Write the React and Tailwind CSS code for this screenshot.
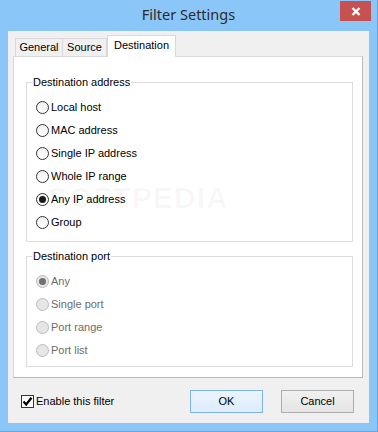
import React from 'react';

const font = { fontFamily: '"Liberation Sans", Arial, sans-serif' };

const Radio = ({ label, checked, disabled }) => (
	<div className="h-[23px] flex items-center pl-[9px]">
		<span
			className={`w-[13px] h-[13px] rounded-full border flex items-center justify-center ${
				disabled
					? 'border-[#bcbcbc] bg-[#e6e6e6]'
					: 'border-[#333333] bg-gradient-to-b from-[#f0f0f0] to-[#ffffff]'
			}`}
		>
			{checked && (
				<span className={`w-[7px] h-[7px] rounded-full ${disabled ? 'bg-[#707070]' : 'bg-[#1a1a1a]'}`}></span>
			)}
		</span>
		<span className={`relative z-10 ml-[2px] text-[11px] ${disabled ? 'text-[#6d6d6d]' : 'text-black'}`}>{label}</span>
	</div>
);

const Group = ({ title, children, className }) => (
	<div className={`relative border border-[#dcdcdc] ${className}`}>
		<span className="absolute -top-[8px] left-[5px] bg-white px-[1px] text-[11px] leading-[14px] text-black">{title}</span>
		{children}
	</div>
);

const App = () => (
	<div className="w-[378px] h-[432px] bg-[#8ac6f7] border-r border-b border-[#6fa6d6] flex flex-col" style={font}>
		{/* title bar */}
		<div className="relative h-[31px] flex items-center justify-center">
			<span className="text-[14.5px] text-[#2b2b2b] -mt-[1px]" style={{ fontFamily: '"Noto Sans", sans-serif' }}>
				Filter Settings
			</span>
			<div className="absolute top-[1px] right-[6px] w-[31px] h-[20px] bg-[#c75050] flex items-center justify-center">
				<svg width="10" height="9" viewBox="0 0 10 9">
					<path d="M1.5 1 L8.5 8 M8.5 1 L1.5 8" stroke="white" strokeWidth="2.4" />
				</svg>
			</div>
		</div>

		{/* client area */}
		<div className="mx-[8px] h-[392px] bg-[#f0f0f0] flex flex-col">
			{/* tabs */}
			<div className="h-[25px] pl-[7px] flex items-end relative z-10">
				<div className="h-[18px] w-[48px] border border-b-0 border-[#d9d9d9] bg-[#f0f0f0] text-[11px] flex items-center justify-center">
					General
				</div>
				<div className="h-[18px] w-[44px] border border-b-0 border-l-0 border-[#d9d9d9] bg-[#f0f0f0] text-[11px] flex items-center justify-center">
					Source
				</div>
				<div className="h-[22px] w-[69px] border border-b-0 border-[#d9d9d9] bg-white text-[11px] flex items-center justify-center -mb-[1px] pb-[2px]">
					Destination
				</div>
			</div>
			<div className="relative ml-[5px] w-[350px] h-[322px] bg-white border border-[#d9d9d9] border-r-[#b9b9b9] border-b-[#b9b9b9] pl-[12px] pr-[9px] pt-[25px]">
				{/* watermark */}
				<div className="absolute left-[34px] top-[126px] text-[30px] leading-[30px] font-bold tracking-[1px] text-[#000000]/[0.03] pointer-events-none select-none">
					SOFTPEDIA<sup className="text-[10px]">®</sup>
				</div>
				<Group title="Destination address" className="pt-[13px] pb-[7px]">
					<Radio label="Local host" />
					<Radio label="MAC address" />
					<Radio label="Single IP address" />
					<Radio label="Whole IP range" />
					<Radio label="Any IP address" checked />
					<Radio label="Group" />
				</Group>
				<Group title="Destination port" className="mt-[14px] pt-[13px] pb-[4px]">
					<Radio label="Any" checked disabled />
					<Radio label="Single port" disabled />
					<Radio label="Port range" disabled />
					<Radio label="Port list" disabled />
				</Group>
			</div>

			{/* bottom row */}
			<div className="flex items-center mt-[12px] h-[23px]">
				<label className="flex items-center ml-[13px]">
					<span className="w-[13px] h-[13px] border border-[#333333] bg-white flex items-center justify-center">
						<svg width="11" height="11" viewBox="0 0 11 11">
							<path d="M1.5 5.5 L4.2 8.5 L9.5 1.8" fill="none" stroke="black" strokeWidth="2.2" />
						</svg>
					</span>
					<span className="ml-[2px] text-[11px] text-black">Enable this filter</span>
				</label>
				<button className="ml-auto w-[73px] h-[23px] border border-[#7eb4ea] bg-gradient-to-b from-[#ecf4fc] to-[#dcecfc] text-[11px] text-black">
					OK
				</button>
				<button className="ml-[18px] mr-[15px] w-[73px] h-[23px] border border-[#adadad] bg-gradient-to-b from-[#f0f0f0] to-[#e5e5e5] text-[11px] text-black">
					Cancel
				</button>
			</div>
		</div>
	</div>
);

export default App;
